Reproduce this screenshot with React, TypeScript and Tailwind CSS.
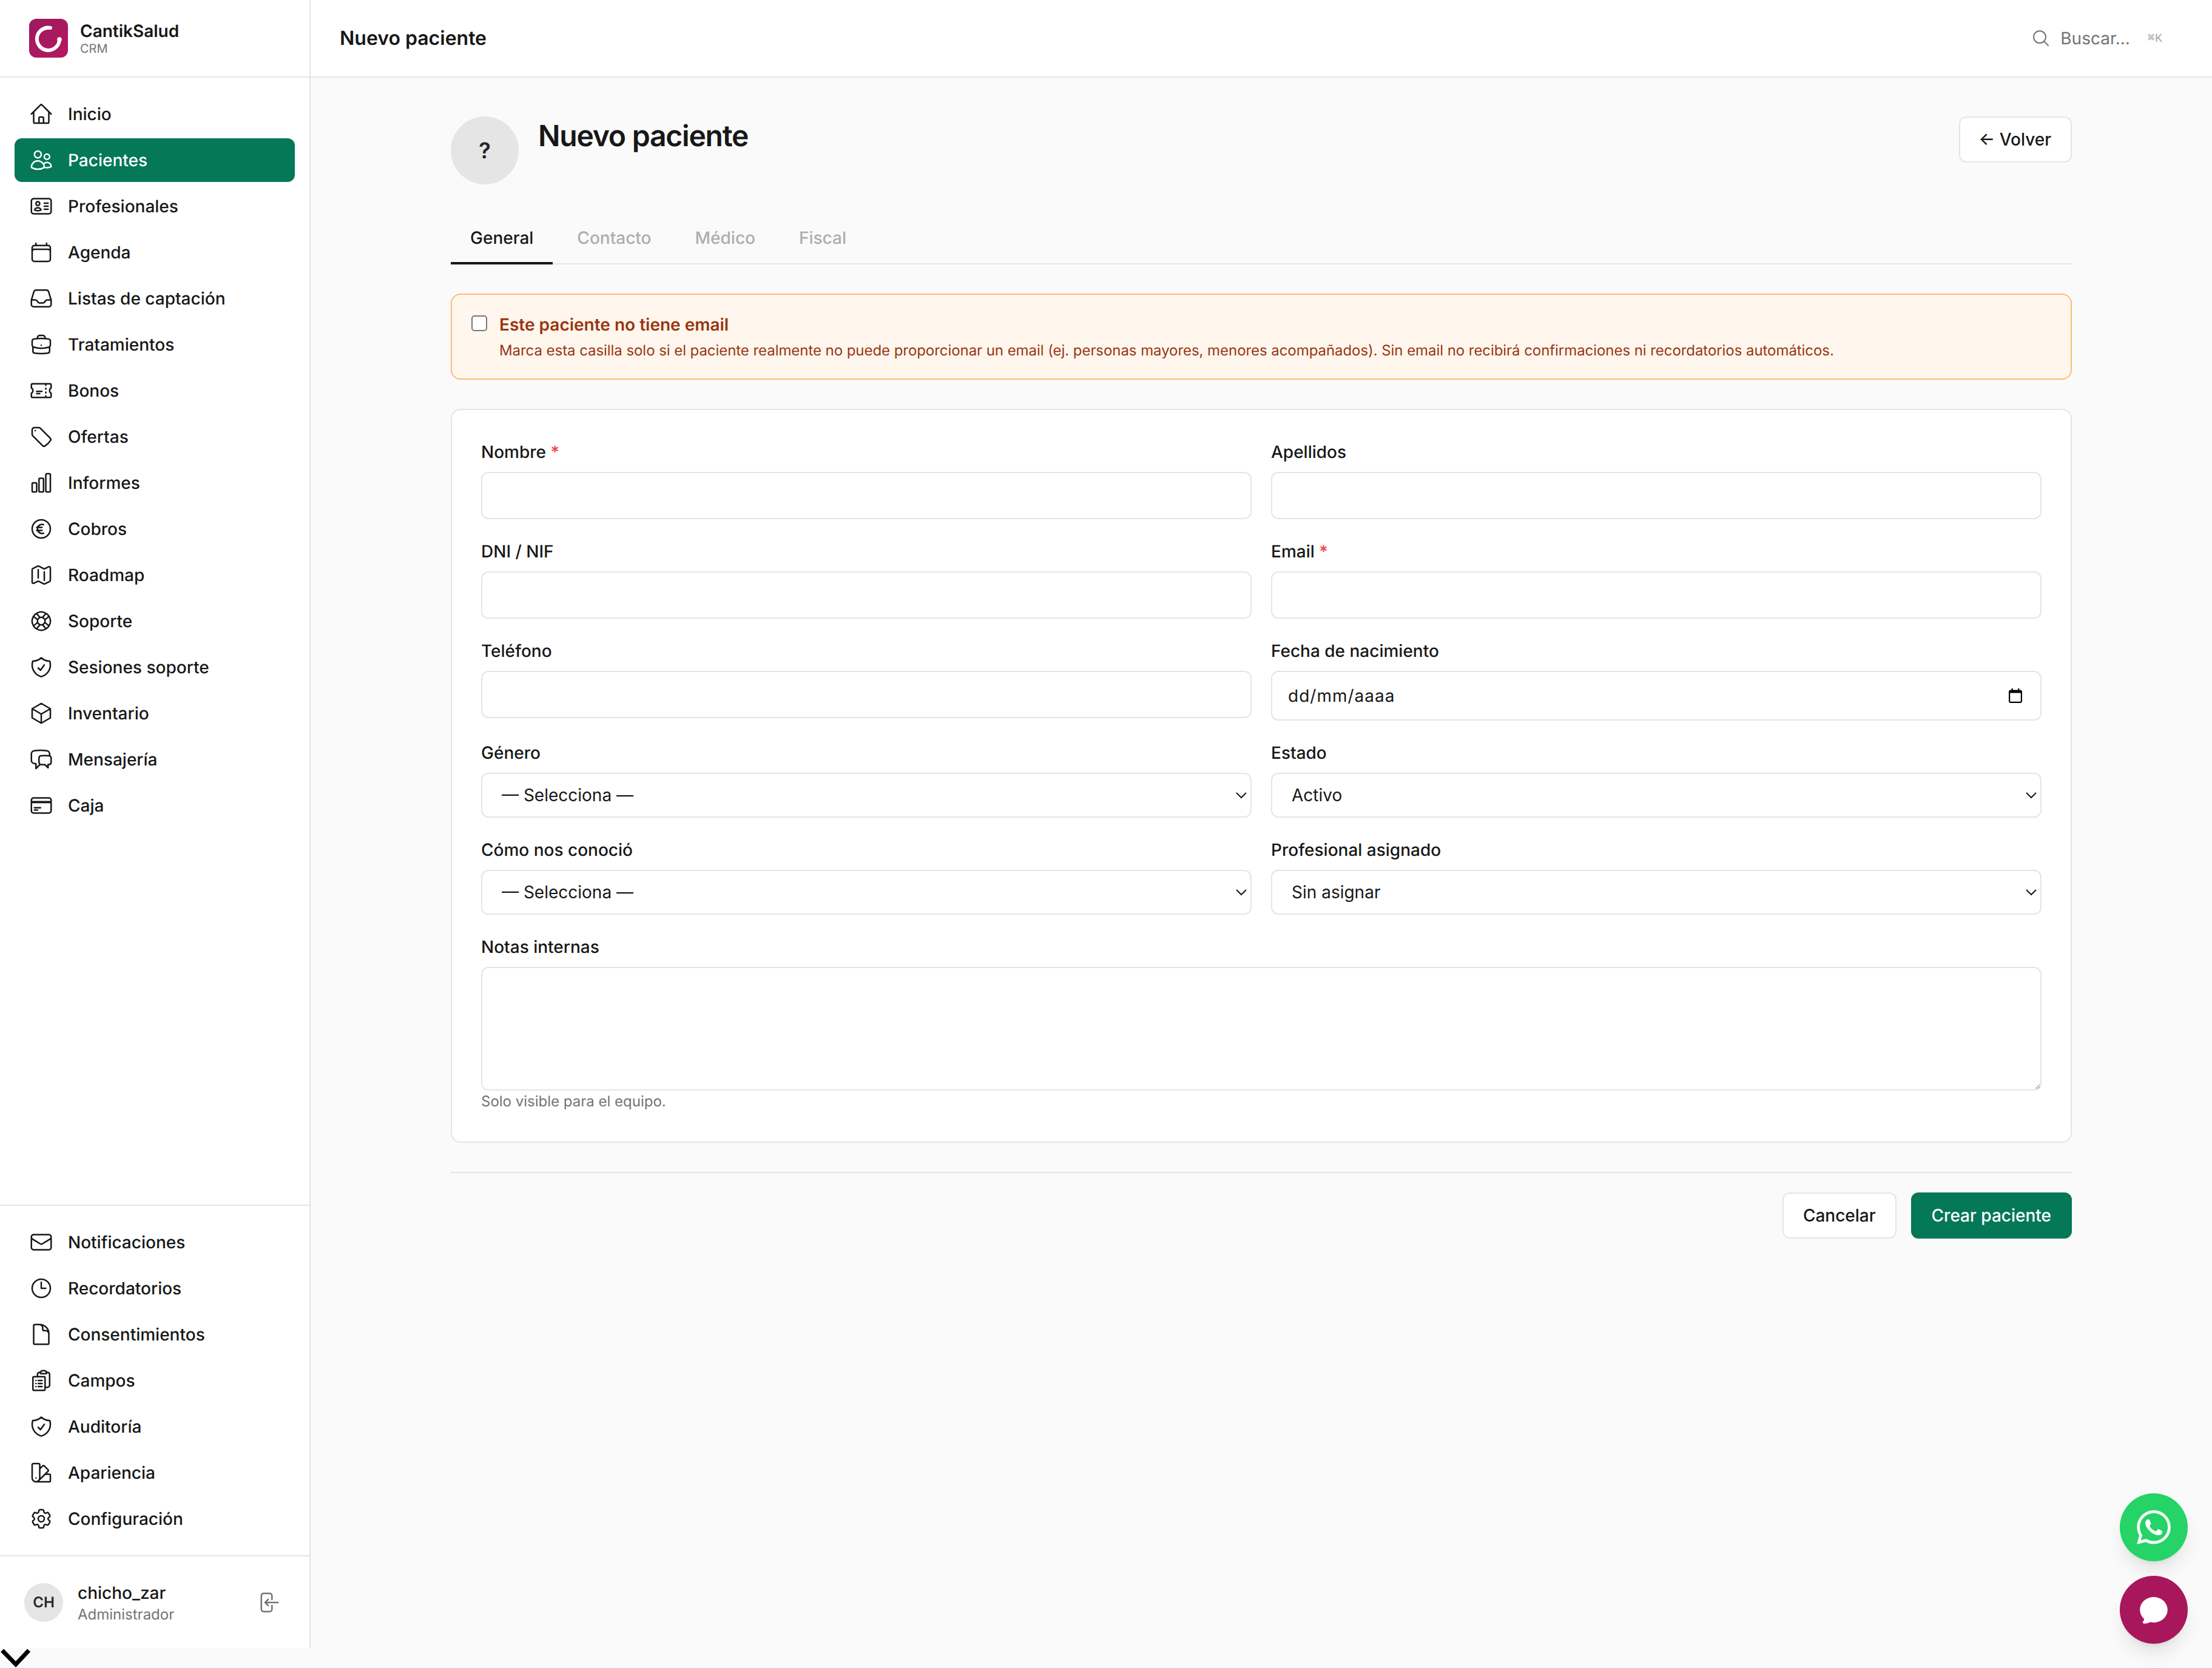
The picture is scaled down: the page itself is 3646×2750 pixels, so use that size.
import React from "react";
import {
  HiOutlineHome, HiOutlineUsers, HiOutlineIdentification, HiOutlineCalendar, HiOutlineInbox,
  HiOutlineBriefcase, HiOutlineTicket, HiOutlineTag, HiOutlineChartBar, HiOutlineCurrencyEuro,
  HiOutlineMap, HiOutlineLifebuoy, HiOutlineShieldCheck, HiOutlineCube, HiOutlineChatBubbleLeftRight,
  HiOutlineCreditCard, HiOutlineEnvelope, HiOutlineClock, HiOutlineDocument, HiOutlineClipboardDocumentList,
  HiOutlineSwatch, HiOutlineCog6Tooth, HiOutlineMagnifyingGlass, HiChatBubbleOvalLeft,
} from "react-icons/hi2";
import { SiWhatsapp } from "react-icons/si";

type Item = { label: string; icon: React.ComponentType<{ className?: string }>; active?: boolean };

const mainNav: Item[] = [
  { label: "Inicio", icon: HiOutlineHome },
  { label: "Pacientes", icon: HiOutlineUsers, active: true },
  { label: "Profesionales", icon: HiOutlineIdentification },
  { label: "Agenda", icon: HiOutlineCalendar },
  { label: "Listas de captación", icon: HiOutlineInbox },
  { label: "Tratamientos", icon: HiOutlineBriefcase },
  { label: "Bonos", icon: HiOutlineTicket },
  { label: "Ofertas", icon: HiOutlineTag },
  { label: "Informes", icon: HiOutlineChartBar },
  { label: "Cobros", icon: HiOutlineCurrencyEuro },
  { label: "Roadmap", icon: HiOutlineMap },
  { label: "Soporte", icon: HiOutlineLifebuoy },
  { label: "Sesiones soporte", icon: HiOutlineShieldCheck },
  { label: "Inventario", icon: HiOutlineCube },
  { label: "Mensajería", icon: HiOutlineChatBubbleLeftRight },
  { label: "Caja", icon: HiOutlineCreditCard },
];

const secondNav: Item[] = [
  { label: "Notificaciones", icon: HiOutlineEnvelope },
  { label: "Recordatorios", icon: HiOutlineClock },
  { label: "Consentimientos", icon: HiOutlineDocument },
  { label: "Campos", icon: HiOutlineClipboardDocumentList },
  { label: "Auditoría", icon: HiOutlineShieldCheck },
  { label: "Apariencia", icon: HiOutlineSwatch },
  { label: "Configuración", icon: HiOutlineCog6Tooth },
];

function NavList({ items }: { items: Item[] }) {
  return (
    <ul className="flex flex-col gap-0.5">
      {items.map((it) => {
        const Icon = it.icon;
        return (
          <li
            key={it.label}
            className={
              it.active
                ? "flex h-9 items-center gap-3 rounded-md bg-[#047857] px-3 text-sm font-medium text-white"
                : "flex h-9 items-center gap-3 rounded-md px-3 text-sm font-medium text-[#171717]"
            }
          >
            <Icon className="h-5 w-5 shrink-0" />
            <span>{it.label}</span>
          </li>
        );
      })}
    </ul>
  );
}

function Logo() {
  return (
    <div className="h-8 w-8 shrink-0 rounded-md bg-gradient-to-br from-[#9c1a60] to-[#b5175f]">
      <svg viewBox="0 0 32 32" className="h-8 w-8" fill="none" stroke="white" strokeWidth="3" strokeLinecap="round">
        <path d="M17.5 7.5A9.3 9.3 0 1 0 25 17.5" />
        <circle cx="25" cy="17" r="1.9" fill="white" stroke="none" />
      </svg>
    </div>
  );
}

function Label({ text, required }: { text: string; required?: boolean }) {
  return (
    <label className="mb-1.5 block text-sm leading-[21px] font-medium text-[#171717]">
      {text}
      {required && <span className="text-[#ef4444]"> *</span>}
    </label>
  );
}

const inputCls =
  "block h-[39px] w-full rounded-md border border-[#e5e5e5] bg-white px-3 py-2 text-sm text-[#171717]";
const selectCls =
  "block h-[37px] w-full rounded-md border border-[#e5e5e5] bg-white px-3 text-sm text-[#171717]";

function Field({ label, required }: { label: string; required?: boolean }) {
  return (
    <div>
      <Label text={label} required={required} />
      <input type="text" className={inputCls} />
    </div>
  );
}

function SelectField({ label, value }: { label: string; value: string }) {
  return (
    <div>
      <Label text={label} />
      <select className={selectCls} defaultValue={value}>
        <option>{value}</option>
      </select>
    </div>
  );
}

export default function App() {
  return (
    <div className="relative h-[1375px] w-[1823px] overflow-hidden bg-[#fafafa] font-[Inter,sans-serif] text-[#171717] [text-rendering:geometricPrecision] [zoom:2]">
      <div className="flex h-[1358.5px]">
        {/* Sidebar */}
        <aside className="flex w-64 shrink-0 flex-col border-r border-[#e5e5e5] bg-white">
          <div className="flex h-16 shrink-0 items-center gap-2.5 border-b border-[#e5e5e5] px-6">
            <Logo />
            <div className="flex flex-col">
              <span className="text-sm leading-[17px] font-semibold">CantikSalud</span>
              <span className="text-[10px] leading-[12px] text-[#737373]">CRM</span>
            </div>
          </div>
          <nav className="flex-1 px-3 pt-3">
            <NavList items={mainNav} />
          </nav>
          <div className="border-t border-[#e5e5e5] px-3 py-3">
            <NavList items={secondNav} />
          </div>
          <div className="flex flex-1 grow-0 basis-[76.5px] items-center gap-3 border-t border-[#e5e5e5] px-5">
            <div className="flex h-8 w-8 shrink-0 items-center justify-center rounded-full bg-[#e5e5e5] text-xs font-semibold text-[#262626]">
              CH
            </div>
            <div className="flex min-w-0 flex-1 flex-col">
              <span className="text-sm leading-5 font-medium">chicho_zar</span>
              <span className="text-xs leading-4 text-[#737373]">Administrador</span>
            </div>
            <button className="p-1 text-[#737373]">
              <svg viewBox="0 0 24 24" fill="none" stroke="currentColor" strokeWidth="1.5" strokeLinecap="round" strokeLinejoin="round" className="h-5 w-5">
                <path d="M15.75 9V5.25A2.25 2.25 0 0 0 13.5 3h-6a2.25 2.25 0 0 0-2.25 2.25v13.5A2.25 2.25 0 0 0 7.5 21h6a2.25 2.25 0 0 0 2.25-2.25V15M12 9l-3 3m0 0 3 3m-3-3h12.75" />
              </svg>
            </button>
          </div>
        </aside>

        {/* Main column */}
        <div className="flex min-w-0 flex-1 flex-col">
          <header className="flex h-16 shrink-0 items-center border-b border-[#e5e5e5] bg-white px-6">
            <h1 className="text-base font-semibold">Nuevo paciente</h1>
            <div className="mr-[17px] ml-auto flex items-center text-[#737373]">
              <HiOutlineMagnifyingGlass className="mr-2 h-4 w-4" />
              <span className="text-sm">Buscar...</span>
              <span className="ml-[14px] flex items-center text-[9px] text-[#a3a3a3]">
                <span className="text-[6.5px]">⌘</span>K
              </span>
            </div>
          </header>

          <main className="mx-auto w-[1336px] pt-8">
            <div className="flex items-start">
              <div className="flex h-14 w-14 shrink-0 items-center justify-center rounded-full bg-[#e5e5e5] text-lg font-semibold text-[#262626]">
                ?
              </div>
              <h2 className="ml-4 text-2xl leading-8 font-semibold tracking-tight">Nuevo paciente</h2>
              <button className="ml-auto rounded-md border border-[#e5e5e5] bg-white py-2 pr-4 pl-[15px] text-sm font-medium">
                ← Volver
              </button>
            </div>

            <div className="mt-5 flex h-[46px] items-end gap-1 border-b border-[#e5e5e5]">
              <span className="-mb-px border-b-2 border-[#171717] px-4 pb-2.5 text-sm font-medium">General</span>
              <span className="px-4 pb-[11px] text-sm font-medium text-[#adadad]">Contacto</span>
              <span className="px-4 pb-[11px] text-sm font-medium text-[#adadad]">Médico</span>
              <span className="px-4 pb-[11px] text-sm font-medium text-[#adadad]">Fiscal</span>
            </div>

            <div className="mt-6 flex items-start gap-2.5 rounded-lg border border-[#fdba74] bg-[#fff7ed] px-4 pt-4 pb-[15px]">
              <input type="checkbox" className="mt-px shrink-0" />
              <div>
                <div className="text-sm leading-[17px] font-semibold text-[#9a3412]">Este paciente no tiene email</div>
                <div className="mt-[5px] text-xs leading-4 tracking-[-0.03px] text-[#9a3412]">
                  Marca esta casilla solo si el paciente realmente no puede proporcionar un email (ej. personas mayores, menores acompañados). Sin email no recibirá confirmaciones ni recordatorios automáticos.
                </div>
              </div>
            </div>

            <div className="mt-6 rounded-lg border border-[#e5e5e5] bg-white p-6">
              <div className="grid grid-cols-2 gap-x-4 gap-y-4">
                <Field label="Nombre" required />
                <Field label="Apellidos" />
                <Field label="DNI / NIF" />
                <Field label="Email" required />
                <Field label="Teléfono" />
                <div>
                  <Label text="Fecha de nacimiento" />
                  <div className="flex h-[41px] items-center rounded-md border border-[#e5e5e5] bg-white pr-[15px] pl-[13px] text-sm">
                    <span className="tracking-[0.5px]">dd/mm/aaaa</span>
                    <svg viewBox="0 0 11 12" className="ml-auto h-3 w-[11px]" fill="#000">
                      <path d="M9.5 1.2H8.7V0H7.6v1.2H3.4V0H2.3v1.2H1.5C.7 1.2 0 1.9 0 2.7v7.8C0 11.3.7 12 1.5 12h8c.8 0 1.5-.7 1.5-1.5V2.7c0-.8-.7-1.5-1.5-1.5zM9.9 10.5c0 .2-.2.4-.4.4h-8a.4.4 0 0 1-.4-.4V3.8h8.8v6.7z" />
                    </svg>
                  </div>
                </div>
                <SelectField label="Género" value="— Selecciona —" />
                <SelectField label="Estado" value="Activo" />
                <SelectField label="Cómo nos conoció" value="— Selecciona —" />
                <SelectField label="Profesional asignado" value="Sin asignar" />
                <div className="col-span-2">
                  <Label text="Notas internas" />
                  <textarea rows={4} className="block h-[102px] w-full rounded-md border border-[#e5e5e5] bg-white px-3 py-2 text-sm" />
                  <p className="text-xs leading-[18px] text-[#737373]">Solo visible para el equipo.</p>
                </div>
              </div>
            </div>

            <div className="mt-6 flex justify-end gap-3 border-t border-[#e5e5e5] pt-4">
              <button className="rounded-md border border-[#e5e5e5] bg-white px-4 py-2 text-sm font-medium">Cancelar</button>
              <button className="rounded-md border border-[#047857] bg-[#047857] px-4 py-2 text-sm font-medium text-white">Crear paciente</button>
            </div>
          </main>
        </div>
      </div>

      {/* Stray chevron below the shell */}
      <svg viewBox="0 0 25 16.5" className="h-[16.5px] w-[25px]" fill="none" stroke="#000" strokeWidth="3.5">
        <path d="M1.8 2 13 13.5 23.8 2" />
      </svg>

      {/* Floating buttons */}
      <div className="fixed right-5 bottom-5 flex flex-col gap-3">
        <button className="flex h-14 w-14 items-center justify-center rounded-full bg-[#25d366] text-white shadow-lg">
          <SiWhatsapp className="h-7 w-7" />
        </button>
        <button className="flex h-14 w-14 items-center justify-center rounded-full bg-[#a8175b] text-white shadow-lg">
          <HiChatBubbleOvalLeft className="h-7 w-7" />
        </button>
      </div>
    </div>
  );
}
